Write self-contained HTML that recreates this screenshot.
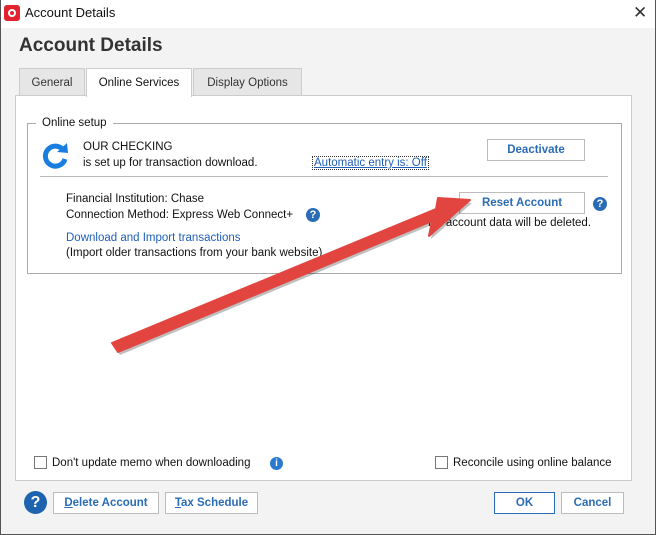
<!DOCTYPE html>
<html><head><style>
*{margin:0;padding:0;box-sizing:border-box}
body{width:656px;height:535px;overflow:hidden;background:#f3f3f3;font-family:"Liberation Sans",sans-serif;font-size:11.5px;color:#111;position:relative}
.a{position:absolute;white-space:nowrap}
.btn{position:absolute;background:#fff;border:1px solid #bcbcbc;color:#2a6cb5;font-weight:bold;text-align:center;font-size:11.5px}
.lnk{color:#1f5fb8}
.cb{position:absolute;width:13px;height:13px;border:1px solid #777;background:#fff}
</style></head><body>
<div class="a" style="left:0;top:0;width:656px;height:28px;background:#fff"></div>
<div class="a" style="left:0;top:0;width:1px;height:535px;background:#555"></div>
<div class="a" style="left:655px;top:0;width:1px;height:535px;background:#555"></div>
<div class="a" style="left:0;top:534px;width:656px;height:1px;background:#555"></div>
<div class="a" style="left:4px;top:5px;width:16px;height:16px;background:#e3222f;border-radius:3px"></div>
<div class="a" style="left:8px;top:9px;width:8px;height:8px;border:2px solid #fff;border-radius:50%"></div>
<div class="a" style="left:25px;top:5px;font-size:13px">Account Details</div>
<div class="a" style="left:633px;top:3px;font-size:17px;color:#333">✕</div>
<div class="a" style="left:19px;top:35px;font-size:19px;font-weight:bold;color:#333">Account Details</div>
<div class="a" style="left:15px;top:95px;width:617px;height:386px;background:#fff;border:1px solid #ccc"></div>
<div class="a" style="left:19px;top:68px;width:66px;height:28px;background:#e6e6e6;border:1px solid #ccc;text-align:center;line-height:28px;color:#333">General</div>
<div class="a" style="left:86px;top:68px;width:106px;height:29px;background:#fff;border:1px solid #ccc;border-bottom:none;text-align:center;line-height:28px">Online Services</div>
<div class="a" style="left:193px;top:68px;width:109px;height:28px;background:#e6e6e6;border:1px solid #ccc;text-align:center;line-height:28px;color:#333">Display Options</div>
<div class="a" style="left:27px;top:123px;width:595px;height:151px;border:1px solid #aaa"></div>
<div class="a" style="left:36px;top:117px;background:#fff;padding:0 6px">Online setup</div>
<svg class="a" style="left:42px;top:141px" width="28" height="28" viewBox="0 0 28 28"><path d="M22 10 A10 10 0 1 0 23 18" fill="none" stroke="#1a7ee0" stroke-width="5"/><path d="M15 11 L26 12 L25 2 Z" fill="#1a7ee0"/></svg>
<div class="a" style="left:83px;top:141px">OUR CHECKING</div>
<div class="a" style="left:83px;top:157px">is set up for transaction download.</div>
<div class="a lnk" style="left:312px;top:156px;border:1px dotted #333;text-decoration:underline;padding:0 1px">Automatic entry is: Off</div>
<div class="btn" style="left:487px;top:139px;width:98px;height:22px;line-height:21px">Deactivate</div>
<div class="a" style="left:40px;top:176px;width:568px;height:1px;background:#bbb"></div>
<div class="a" style="left:66px;top:193px">Financial Institution: Chase</div>
<div class="a" style="left:66px;top:209px">Connection Method: Express Web Connect+</div>
<div class="a" style="left:306px;top:208px;width:14px;height:14px;border-radius:50%;background:#2a6cb5;color:#fff;font-weight:bold;font-size:11px;text-align:center;line-height:14px">?</div>
<div class="a lnk" style="left:66px;top:232px">Download and Import transactions</div>
<div class="a" style="left:66px;top:247px">(Import older transactions from your bank website)</div>
<div class="a" style="left:428px;top:217px">No account data will be deleted.</div>
<div class="btn" style="left:459px;top:192px;width:126px;height:22px;line-height:21px">Reset Account</div>
<div class="a" style="left:593px;top:197px;width:14px;height:14px;border-radius:50%;background:#2a6cb5;color:#fff;font-weight:bold;font-size:11px;text-align:center;line-height:14px">?</div>
<svg class="a" style="left:0;top:0" width="656" height="535"><g transform="translate(2,3)" opacity="0.25"><path d="M112 343 L436 209 L438 198 L470 200 L429 236 L432 221 L118 352 Z" fill="#000"/></g><path d="M112 343 L436 209 L438 198 L470 200 L429 236 L432 221 L118 352 Z" fill="#e2453f" stroke="#e2453f" stroke-width="2" stroke-linejoin="round"/></svg>
<div class="cb" style="left:34px;top:456px"></div>
<div class="a" style="left:52px;top:457px">Don't update memo when downloading</div>
<div class="a" style="left:270px;top:457px;width:13px;height:13px;border-radius:50%;background:#2a7ad0;color:#fff;font-weight:bold;font-size:10px;text-align:center;line-height:13px">i</div>
<div class="cb" style="left:435px;top:456px"></div>
<div class="a" style="left:453px;top:457px">Reconcile using online balance</div>
<div class="a" style="left:24px;top:491px;width:23px;height:23px;border-radius:50%;background:#1d63b0;color:#fff;font-weight:bold;font-size:16px;text-align:center;line-height:23px">?</div>
<div class="btn" style="left:53px;top:492px;width:106px;height:22px;line-height:21px"><u>D</u>elete Account</div>
<div class="btn" style="left:165px;top:492px;width:93px;height:22px;line-height:21px"><u>T</u>ax Schedule</div>
<div class="btn" style="left:494px;top:492px;width:61px;height:22px;line-height:21px;border-color:#2a6cb5">OK</div>
<div class="btn" style="left:561px;top:492px;width:63px;height:22px;line-height:21px">Cancel</div>
</body></html>
